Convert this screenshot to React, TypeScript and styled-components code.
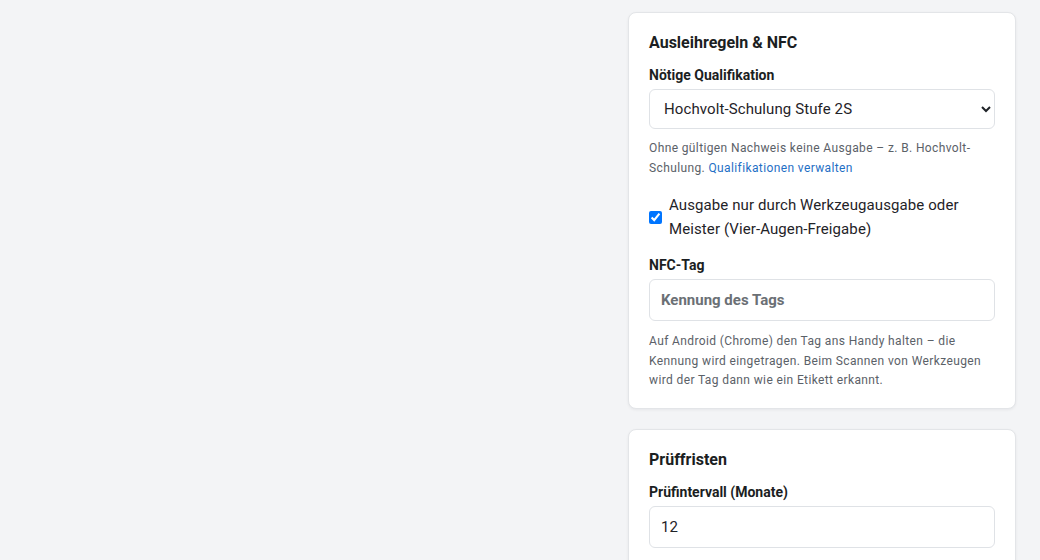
import styled, { createGlobalStyle } from 'styled-components';

const GlobalStyle = createGlobalStyle`
  html, body {
    margin: 0;
    padding: 0;
    background: #f3f4f6;
    font-family: Roboto, "Liberation Sans", sans-serif;
    color: #1f2328;
  }
  * {
    box-sizing: border-box;
  }
`;

const Page = styled.div`
  display: grid;
  grid-template-columns: 1fr 388px;
  column-gap: 20px;
  padding: 12px 24px 0 0;
  min-height: 560px;
`;

const Aside = styled.div`
  grid-column: 2;
  display: flex;
  flex-direction: column;
  gap: 20px;
`;

const Card = styled.section`
  background: #fff;
  border: 1px solid #e3e5e8;
  border-radius: 8px;
  box-shadow: 0 1px 3px rgba(16, 24, 40, 0.06);
  padding: 19px 20px 17px;
  display: flex;
  flex-direction: column;
`;

const Title = styled.h2`
  margin: 0 0 12px;
  font-size: 16px;
  font-weight: 700;
  line-height: 22px;
  color: #1b1e22;
`;

const Label = styled.label`
  display: block;
  font-size: 14px;
  font-weight: 700;
  line-height: 18px;
  margin-bottom: 5px;
  color: #1b1e22;
`;

const Field = styled.div<{ $last?: boolean }>`
  display: flex;
  flex-direction: column;
  margin-bottom: ${(p) => (p.$last ? '0' : '12px')};
`;

const Select = styled.select`
  height: 40px;
  width: 100%;
  border: 1px solid #dfe2e6;
  border-radius: 6px;
  background: #fff;
  padding: 0 10px 0 10px;
  font: inherit;
  font-size: 15px;
  letter-spacing: 0.1px;
  color: #1f2328;
`;

const Input = styled.input`
  height: 42px;
  width: 100%;
  border: 1px solid #dfe2e6;
  border-radius: 6px;
  background: #fff;
  padding: 0 11px;
  font: inherit;
  font-size: 15px;
  color: #1f2328;

  &::placeholder {
    color: #6b7075;
    font-weight: 700;
  }
`;

const Hint = styled.p<{ $gap?: number }>`
  margin: ${(p) => p.$gap ?? 10}px 0 0;
  font-size: 12px;
  line-height: 19.5px;
  letter-spacing: 0.38px;
  color: #5b6168;
`;

const Link = styled.a`
  color: #1f6fc5;
  text-decoration: none;
`;

const CheckRow = styled.label`
  display: flex;
  align-items: center;
  gap: 7px;
  margin: 3px 0 15px;
  font-size: 15px;
  line-height: 24px;
  letter-spacing: 0.1px;
  color: #1f2328;

  input {
    margin: 0;
    width: 13px;
    height: 13px;
    flex: none;
  }
`;

export default function App() {
  return (
    <>
      <GlobalStyle />
      <Page>
        <Aside>
          <Card>
            <Title>Ausleihregeln &amp; NFC</Title>
            <Field>
              <Label>Nötige Qualifikation</Label>
              <Select defaultValue="hv2s">
                <option value="none">Keine</option>
                <option value="hv2s">Hochvolt-Schulung Stufe 2S</option>
              </Select>
              <Hint>
                Ohne gültigen Nachweis keine Ausgabe – z. B. Hochvolt-Schulung.{' '}
                <Link href="#">Qualifikationen verwalten</Link>
              </Hint>
            </Field>
            <CheckRow>
              <input type="checkbox" defaultChecked />
              <span>Ausgabe nur durch Werkzeugausgabe oder Meister (Vier-Augen-Freigabe)</span>
            </CheckRow>
            <Field $last>
              <Label>NFC-Tag</Label>
              <Input placeholder="Kennung des Tags" />
              <Hint $gap={11}>
                Auf Android (Chrome) den Tag ans Handy halten – die Kennung wird eingetragen. Beim
                Scannen von Werkzeugen wird der Tag dann wie ein Etikett erkannt.
              </Hint>
            </Field>
          </Card>
          <Card>
            <Title>Prüffristen</Title>
            <Field>
              <Label>Prüfintervall (Monate)</Label>
              <Input defaultValue="12" />
            </Field>
          </Card>
        </Aside>
      </Page>
    </>
  );
}
